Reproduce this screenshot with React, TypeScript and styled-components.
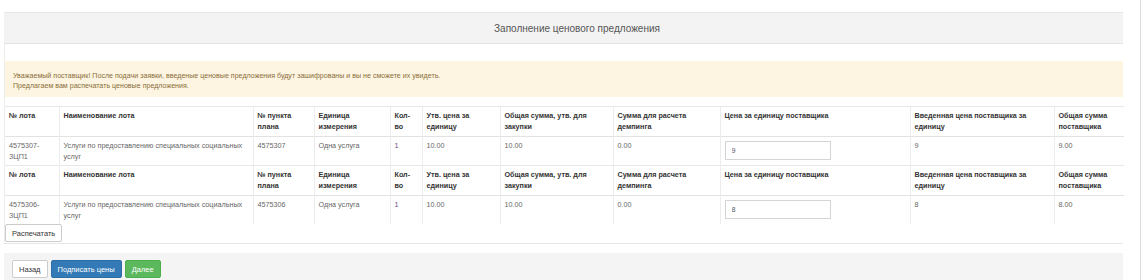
import React from "react";
import styled, { createGlobalStyle } from 'styled-components';

const GlobalStyle = createGlobalStyle`
  html, body {
    margin: 0;
    padding: 0;
    background: #fff;
    font-family: "Liberation Sans", Arial, sans-serif;
  }
`;

interface Lot {
  lot: string
  name: string
  planNo: string
  unit: string
  qty: string
  unitPrice: string
  total: string
  dumping: string
  supplierPrice: string
  supplierTotal: string
}

const LOTS: Lot[] = [
  {
    lot: '4575307-ЗЦП1',
    name: 'Услуги по предоставлению специальных социальных услуг',
    planNo: '4575307',
    unit: 'Одна услуга',
    qty: '1',
    unitPrice: '10.00',
    total: '10.00',
    dumping: '0.00',
    supplierPrice: '9',
    supplierTotal: '9.00',
  },
  {
    lot: '4575306-ЗЦП1',
    name: 'Услуги по предоставлению специальных социальных услуг',
    planNo: '4575306',
    unit: 'Одна услуга',
    qty: '1',
    unitPrice: '10.00',
    total: '10.00',
    dumping: '0.00',
    supplierPrice: '8',
    supplierTotal: '8.00',
  },
];

const HEADERS = [
  '№ лота',
  'Наименование лота',
  '№ пункта плана',
  'Единица измерения',
  'Кол-во',
  'Утв. цена за единицу',
  'Общая сумма, утв. для закупки',
  'Сумма для расчета демпинга',
  'Цена за единицу поставщика',
  'Введенная цена поставщика за единицу',
  'Общая сумма поставщика',
];

const COL_WIDTHS = [54, 194, 61, 76, 32, 78, 113, 107, 190, 144, 70];

export default function App() {
  /*
   * Component
   */

  return (
    <>
      <GlobalStyle />
      <Page>
        <Main>
          <Panel>
            <PanelHeading>Заполнение ценового предложения</PanelHeading>

            <PanelBody>
              <Alert>
                Уважаемый поставщик! После подачи заявки, введеные ценовые предложения будут зашифрованы и вы не сможете их увидеть.
                <br />
                Предлагаем вам распечатать ценовые предложения.
              </Alert>

              <PriceTable>
                <colgroup>
                  {COL_WIDTHS.map((w, i) => (
                    <col key={i} width={w} />
                  ))}
                </colgroup>
                {LOTS.map((lot) => (
                  <tbody key={lot.lot}>
                    <HeadRow>
                      {HEADERS.map((h) => (
                        <HeadCell key={h}>{h}</HeadCell>
                      ))}
                    </HeadRow>
                    <tr>
                      <Cell>{lot.lot}</Cell>
                      <Cell>{lot.name}</Cell>
                      <Cell>{lot.planNo}</Cell>
                      <Cell>{lot.unit}</Cell>
                      <Cell $accent>{lot.qty}</Cell>
                      <Cell>{lot.unitPrice}</Cell>
                      <Cell>{lot.total}</Cell>
                      <Cell>{lot.dumping}</Cell>
                      <Cell>
                        <PriceInput defaultValue={lot.supplierPrice} />
                      </Cell>
                      <Cell>{lot.supplierPrice}</Cell>
                      <Cell>{lot.supplierTotal}</Cell>
                    </tr>
                  </tbody>
                ))}
              </PriceTable>

              <Button>Распечатать</Button>
            </PanelBody>
          </Panel>

          <Footer>
            <Button>Назад</Button>
            <Button $variant="primary">Подписать цены</Button>
            <Button $variant="success">Далее</Button>
          </Footer>
        </Main>

        <ScrollTrack />
      </Page>
    </>
  );
}

const Page = styled.div`
  display: flex;
  width: 1145px;
  height: 280px;
  overflow: hidden;
`;

const Main = styled.div`
  width: 1119px;
  margin-left: 4px;
  padding-top: 12px;
  display: flex;
  flex-direction: column;
`;

const ScrollTrack = styled.div`
  margin-left: 17px;
  width: 4px;
  height: 100%;
  border-left: 1px solid #dedede;
`;

const Panel = styled.div`
  display: flex;
  flex-direction: column;
`;

const PanelHeading = styled.div`
  height: 32px;
  box-sizing: border-box;
  display: flex;
  align-items: center;
  justify-content: center;
  padding-left: 27px;
  background: #f3f3f3;
  border-top: 1px solid #e6e6e6;
  border-bottom: 1px solid #e3e3e3;
  color: #555;
  font-size: 10px;
`;

const PanelBody = styled.div`
  display: flex;
  flex-direction: column;
  align-items: flex-start;
  padding-top: 17px;
  border-left: 1px solid #ececec;
  border-bottom: 1px solid #e6e6e6;
  padding-bottom: 1px;
`;

const Alert = styled.div`
  align-self: stretch;
  background: #fdf5e1;
  color: #8a6d3b;
  font-size: 7.1px;
  line-height: 10px;
  padding: 10px 8px 6px;
  margin-bottom: 9px;
`;

const PriceTable = styled.table`
  width: 1119px;
  table-layout: fixed;
  border-collapse: collapse;
  font-size: 7.2px;
  line-height: 10.5px;
`;

const HeadRow = styled.tr`
  border-top: 1px solid #e8e8e8;
  border-bottom: 1px solid #e2e2e2;
`;

const HeadCell = styled.th`
  text-align: left;
  vertical-align: top;
  font-weight: bold;
  color: #333;
  padding: 4px;
  border-left: 1px solid #ececec;

  &:first-child {
    border-left: none;
  }
`;

const Cell = styled.td<{ $accent?: boolean }>`
  vertical-align: top;
  color: ${({ $accent }) => ($accent ? '#6d4a8a' : '#666')};
  padding: 4px 4px 3px;
  border-left: 1px solid #ececec;

  &:first-child {
    border-left: none;
  }
`;

const PriceInput = styled.input`
  display: block;
  width: 106px;
  height: 19px;
  box-sizing: border-box;
  border: 1px solid #d4d4d4;
  padding: 0 6px;
  font-family: "Liberation Sans", Arial, sans-serif;
  font-size: 7.2px;
  color: #555;
  outline: none;
`;

const Footer = styled.div`
  margin-top: 9px;
  flex: 1;
  background: #f4f4f4;
  display: flex;
  align-items: flex-start;
  gap: 3px;
  padding: 7px 0 0 8px;
`;

const Button = styled.button<{ $variant?: 'primary' | 'success' }>`
  height: 18px;
  box-sizing: border-box;
  padding: 0 6px;
  border-radius: 2px;
  font-family: "Liberation Sans", Arial, sans-serif;
  font-size: 7.5px;
  cursor: pointer;
  border: 1px solid
    ${({ $variant }) =>
      $variant === 'primary' ? '#2e6da4' : $variant === 'success' ? '#4cae4c' : '#ccc'};
  background: ${({ $variant }) =>
    $variant === 'primary' ? '#337ab7' : $variant === 'success' ? '#5cb85c' : '#fff'};
  color: ${({ $variant }) => ($variant ? '#fff' : '#333')};
`;
